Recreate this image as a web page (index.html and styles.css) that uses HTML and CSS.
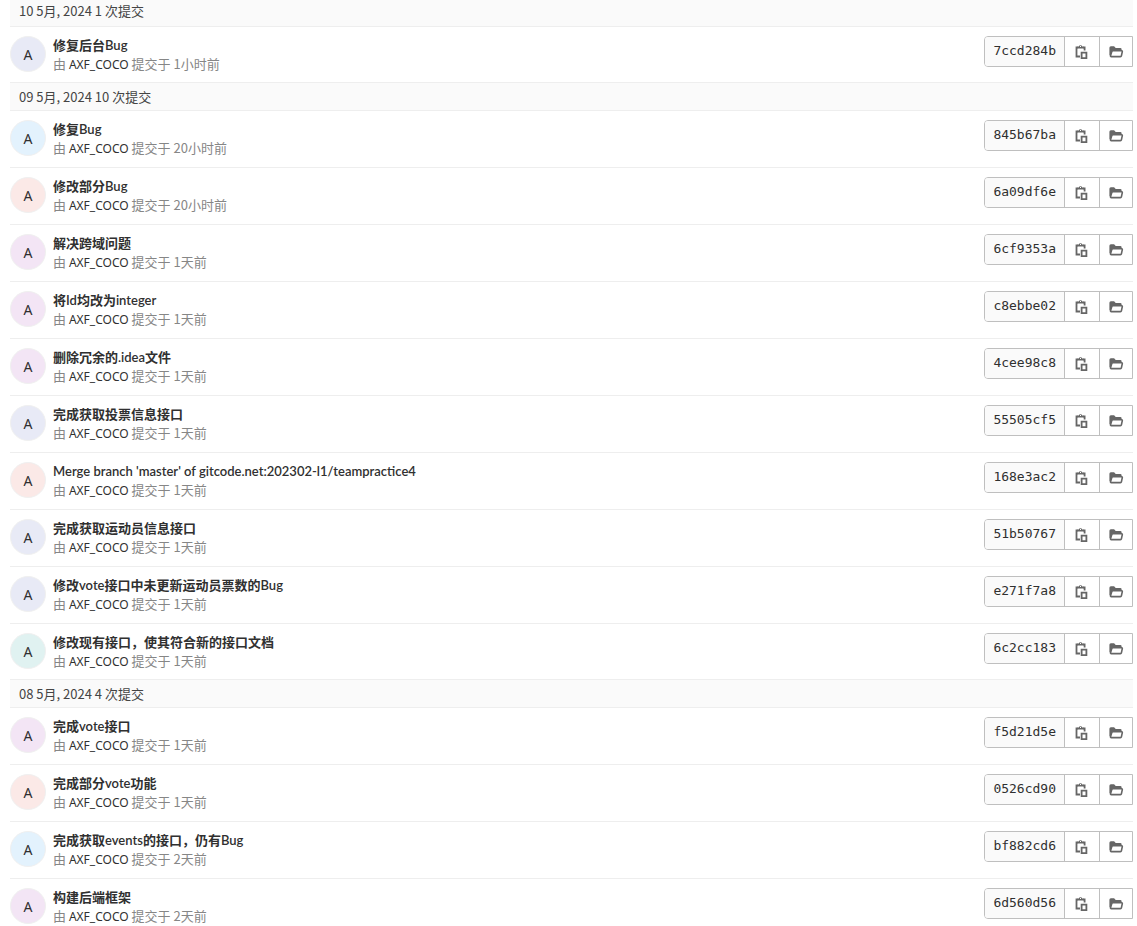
FILE: index.html
```html
<!DOCTYPE html>
<html lang="zh-CN">
<head>
  <meta charset="UTF-8" />
  <title>提交</title>
  <link rel="stylesheet" href="styles.css">
</head>
<body>

  <!-- 图标 -->
  <svg class="sprite" aria-hidden="true">
    <symbol id="icon-copy" viewBox="0 0 16 16">
      <path d="M4 3.5H2.5V12.5H6M9 3.5h1.6v3" fill="none" stroke="currentColor" stroke-width="1.8" />
      <path d="M3.5 4.6V2.5h1.2a1.9 1.9 0 0 1 3.6 0h1.2v2.1z" fill="currentColor" />
      <path d="M6 2h1v1H6z" fill="#fff" />
      <path d="M7.6 8.6h4.8v5.6H7.6z" fill="none" stroke="currentColor" stroke-width="1.8" />
    </symbol>
    <symbol id="icon-folder" viewBox="0 0 16 16">
      <path d="M1.4 11V3.8a1.5 1.5 0 0 1 1.5-1.5h3.2l1.6 1.6h4.6a1.3 1.3 0 0 1 1.3 1.3v1.2H5.2L3.6 12.6z" fill="currentColor" />
      <path d="M5 6.8h8.7a.6.6 0 0 1 .6.8l-.9 4.2a1 1 0 0 1-1 .8H3.2a.7.7 0 0 1-.7-.9l1.2-4A1.3 1.3 0 0 1 5 6.8z" fill="#fff" stroke="currentColor" stroke-width="1.6" />
    </symbol>
  </svg>

  <main id="commits"></main>

  <script>
    // 按日期分组：[头像颜色, 标题, 时间, 短哈希]
    const groups = [
      { day: '10 5月, 2024', commits: [
        ['indigo', '修复后台Bug', '1小时前', '7ccd284b']
      ]},
      { day: '09 5月, 2024', commits: [
        ['blue', '修复Bug', '20小时前', '845b67ba'],
        ['red', '修改部分Bug', '20小时前', '6a09df6e'],
        ['purple', '解决跨域问题', '1天前', '6cf9353a'],
        ['purple', '将Id均改为integer', '1天前', 'c8ebbe02'],
        ['purple', '删除冗余的.idea文件', '1天前', '4cee98c8'],
        ['indigo', '完成获取投票信息接口', '1天前', '55505cf5'],
        ['red', "Merge branch 'master' of gitcode.net:202302-l1/teampractice4", '1天前', '168e3ac2'],
        ['indigo', '完成获取运动员信息接口', '1天前', '51b50767'],
        ['indigo', '修改vote接口中未更新运动员票数的Bug', '1天前', 'e271f7a8'],
        ['teal', '修改现有接口，使其符合新的接口文档', '1天前', '6c2cc183']
      ]},
      { day: '08 5月, 2024', commits: [
        ['purple', '完成vote接口', '1天前', 'f5d21d5e'],
        ['red', '完成部分vote功能', '1天前', '0526cd90'],
        ['blue', '完成获取events的接口，仍有Bug', '2天前', 'bf882cd6'],
        ['purple', '构建后端框架', '2天前', '6d560d56']
      ]}
    ];

    function commitRow([color, title, time, sha]) {
      return `
        <li class="commit">
          <div class="avatar avatar-${color}">A</div>
          <div class="commit-content">
            <a class="commit-title" href="#${sha}">${title}</a>
            <div class="commit-meta">由 <a class="author" href="#author">AXF_COCO</a> 提交于 <time>${time}</time></div>
          </div>
          <div class="btn-group">
            <span class="sha">${sha}</span>
            <button class="btn btn-copy" type="button" aria-label="复制提交 SHA" data-sha="${sha}"><svg><use href="#icon-copy" /></svg></button>
            <a class="btn btn-browse" href="#tree-${sha}" aria-label="浏览文件"><svg><use href="#icon-folder" /></svg></a>
          </div>
        </li>`;
    }

    const list = document.getElementById('commits');
    list.innerHTML = groups.map(g => `
      <h2 class="day">${g.day} ${g.commits.length} 次提交</h2>
      <ul class="commit-list">${g.commits.map(commitRow).join('')}</ul>`).join('');

    // 点击复制哈希
    list.addEventListener('click', e => {
      const btn = e.target.closest('.btn-copy');
      if (btn && navigator.clipboard) navigator.clipboard.writeText(btn.dataset.sha);
    });
  </script>
</body>
</html>
```
FILE: styles.css
```css
* {
  box-sizing: border-box;
}
body {
  margin: 0;
  padding: 0 4px 0 10px;
  font-family: "Noto Sans CJK SC", "Noto Sans", sans-serif;
  font-size: 13px;
  line-height: 18px;
  color: #303030;
  background-color: #fff;
}
a {
  color: inherit;
  text-decoration: none;
}
.sprite {
  display: none;
}

/* 日期标题 */
.day {
  margin: -1px 0 0;
  padding: 5px 9px 4px;
  border: solid #eee;
  border-width: 1px 0;
  background-color: #fafafa;
  font-size: 13px;
  font-weight: 400;
  color: #444;
}
.day:first-child {
  margin-top: 0;
  padding: 2px 9px 6px;
  border-top: 0;
}

/* 提交列表 */
.commit-list {
  margin: 0;
  padding: 0;
  list-style: none;
}
.commit {
  display: flex;
  align-items: flex-start;
  padding: 9px 0 10px;
  border-bottom: 1px solid #eee;
}
.commit:last-child {
  border-bottom: 0;
}
.avatar {
  flex: none;
  width: 36px;
  height: 36px;
  margin-right: 7px;
  border: 1px solid #f0f0f0;
  border-radius: 50%;
  font-family: "Noto Sans", sans-serif;
  font-size: 14px;
  line-height: 36px;
  text-align: center;
}
.avatar-indigo { background-color: #e8eaf6; }
.avatar-blue { background-color: #e3f2fd; }
.avatar-red { background-color: #fbe9e7; }
.avatar-purple { background-color: #f3e5f5; }
.avatar-teal { background-color: #e0f2f1; }

.commit-content {
  flex: 1;
  min-width: 0;
}
.commit-title {
  display: block;
  font-family: Lato, "Noto Sans CJK SC", sans-serif;
  font-weight: 600;
}
.commit-meta {
  height: 18px;
  margin-top: 1px;
  color: #868686;
}
.author {
  font-family: "Noto Sans", sans-serif;
  font-size: 12px;
  color: #303030;
}

/* 哈希与按钮 */
.btn-group {
  display: flex;
  height: 31px;
  border: 1px solid #bfbfbf;
  border-radius: 4px 0 0 4px;
}
.sha {
  padding: 0 8px;
  border-radius: 3px 0 0 3px;
  background-color: #fafafa;
  font-family: "DejaVu Sans Mono", monospace;
  font-size: 13px;
  line-height: 28px;
}
.btn {
  display: flex;
  align-items: center;
  justify-content: center;
  width: 33px;
  padding: 0;
  border: 0;
  border-left: 1px solid #bfbfbf;
  background-color: #fff;
  color: #666;
}
.btn-copy {
  width: 35px;
}
.btn svg {
  width: 16px;
  height: 16px;
}
```
